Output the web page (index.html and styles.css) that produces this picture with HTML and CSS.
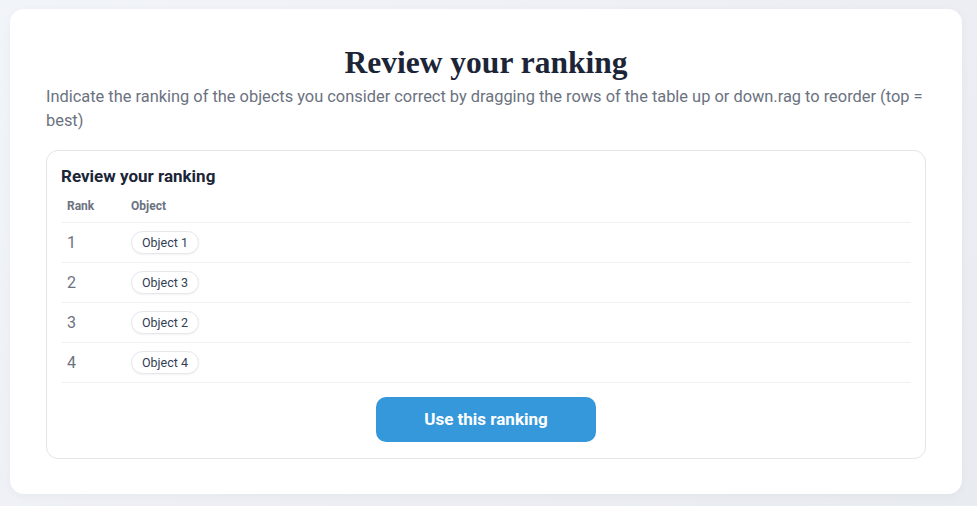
FILE: index.html
```html
<!DOCTYPE html>
<html lang="en">
<head>
<meta charset="utf-8">
<title>Review your ranking</title>
<link rel="stylesheet" href="styles.css">
</head>
<body>
<main class="page">
  <section class="card">
    <h1 class="title">Review your ranking</h1>
    <p class="lead">Indicate the ranking of the objects you consider correct by dragging the rows of the table up or down.rag to reorder (top = best)</p>
    <div class="panel">
      <h2 class="panel-title">Review your ranking</h2>
      <table class="rank-table">
        <thead>
          <tr><th class="col-rank">Rank</th><th>Object</th></tr>
        </thead>
        <tbody>
          <tr><td class="rank">1</td><td><span class="pill">Object 1</span></td></tr>
          <tr><td class="rank">2</td><td><span class="pill">Object 3</span></td></tr>
          <tr><td class="rank">3</td><td><span class="pill">Object 2</span></td></tr>
          <tr><td class="rank">4</td><td><span class="pill">Object 4</span></td></tr>
        </tbody>
      </table>
      <div class="actions">
        <button class="btn" type="button">Use this ranking</button>
      </div>
    </div>
  </section>
</main>
</body>
</html>
```

FILE: styles.css
```css
* { box-sizing: border-box; }
html, body { margin: 0; height: 100%; }
body {
  font-family: Roboto, "Liberation Sans", sans-serif;
  background: linear-gradient(135deg, #f1f4f9 0%, #eceef4 60%, #e8ebf0 100%);
}
.page {
  padding: 9px 15px 13px 10px;
}
.card {
  background: #ffffff;
  border-radius: 14px;
  padding: 36px 36px 35px;
  box-shadow: 0 2px 8px rgba(30, 41, 59, 0.04);
}
.title {
  margin: 0;
  text-align: center;
  font-family: "Liberation Serif", "DejaVu Serif", serif;
  font-weight: 700;
  font-size: 31.5px;
  line-height: 36px;
  color: #1c2537;
}
.lead {
  margin: 4px 0 17px;
  font-size: 16.4px;
  line-height: 24px;
  color: #6b7280;
}
.panel {
  border: 1px solid #e3e5e8;
  border-radius: 12px;
  padding: 14px 14px 16px;
}
.panel-title {
  margin: 0 0 10px;
  font-size: 17px;
  font-weight: 700;
  line-height: 22px;
  color: #1c2537;
}
.rank-table {
  width: 100%;
  border-collapse: collapse;
}
.rank-table th {
  text-align: left;
  font-size: 12px;
  font-weight: 700;
  color: #6b7280;
  padding: 0 6px 6px;
  height: 25px;
  border-bottom: 1px solid #f0f1f4;
}
.rank-table .col-rank { width: 64px; }
.rank-table td {
  height: 40px;
  padding: 0 6px;
  border-bottom: 1px solid #f0f1f4;
  vertical-align: middle;
}
.rank {
  font-size: 16px;
  color: #6b7280;
}
.pill {
  display: inline-block;
  font-size: 12.5px;
  line-height: 21px;
  padding: 0 10px;
  color: #334155;
  border: 1px solid #e5e7eb;
  border-radius: 999px;
  background: #fff;
  box-shadow: 0 1px 2px rgba(0, 0, 0, 0.05);
}
.actions {
  display: flex;
  justify-content: center;
  margin-top: 14px;
}
.btn {
  width: 220px;
  height: 45px;
  border: 0;
  border-radius: 10px;
  background: #3498db;
  color: #fff;
  font-family: Roboto, "Liberation Sans", sans-serif;
  font-size: 17px;
  font-weight: 700;
}
```
